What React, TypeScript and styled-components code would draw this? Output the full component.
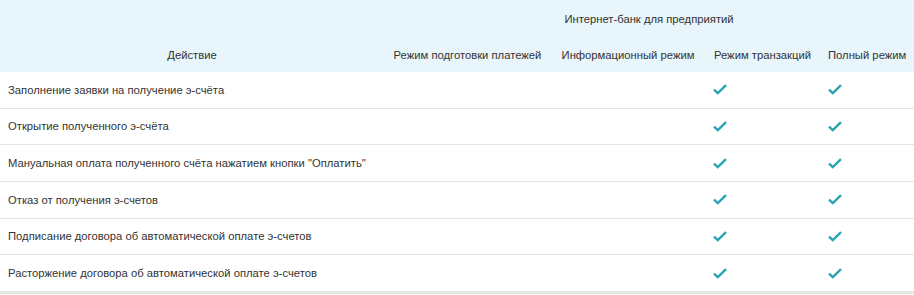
import React from "react";
import styled, { createGlobalStyle } from "styled-components";

const Global = createGlobalStyle`
  html, body { margin: 0; padding: 0; background: #ffffff; }
  body { font-family: "Liberation Sans", Arial, sans-serif; }
`;

const Table = styled.table`
  width: 914px;
  border-collapse: collapse;
  table-layout: fixed;
  font-family: "Liberation Sans", Arial, sans-serif;
  font-size: 11.25px;
  color: #333333;
`;

const Head = styled.thead`
  background: #e8f5fa;
`;

const HeadCell = styled.th<{ $align?: string }>`
  height: 34px;
  padding: 2px 8px 0;
  font-weight: normal;
  text-align: center;
  vertical-align: ${(p) => p.$align ?? "middle"};
  white-space: nowrap;
  line-height: 14px;
`;

const ActionHead = styled(HeadCell)`
  padding-bottom: 10px;
`;

const Row = styled.tr<{ $last?: boolean }>`
  border-bottom: ${(p) => (p.$last ? "3px solid #e8e6e3" : "1px solid #e5e5e5")};
`;

const Cell = styled.td`
  height: 35.67px;
  padding: 0 8px;
  text-align: left;
  vertical-align: middle;
  line-height: 14px;
  white-space: nowrap;
`;

const Check = () => (
  <svg width="14" height="11" viewBox="0 0 14 11" style={{ display: "block" }}>
    <path
      d="M1 5.6 L4.8 9.2 L13 1.2"
      fill="none"
      stroke="#2aa3b3"
      strokeWidth="2.4"
      strokeLinejoin="miter"
    />
  </svg>
);

const rows = [
  "Заполнение заявки на получение э-счёта",
  "Открытие полученного э-счёта",
  "Мануальная оплата полученного счёта нажатием кнопки \"Оплатить\"",
  "Отказ от получения э-счетов",
  "Подписание договора об автоматической оплате э-счетов",
  "Расторжение договора об автоматической оплате э-счетов",
];

export default function App() {
  return (
    <>
      <Global />
      <Table>
        <colgroup>
          <col style={{ width: 384 }} />
          <col style={{ width: 167 }} />
          <col style={{ width: 154 }} />
          <col style={{ width: 115 }} />
          <col style={{ width: 94 }} />
        </colgroup>
        <Head>
          <tr>
            <ActionHead rowSpan={2} $align="bottom">
              Действие
            </ActionHead>
            <HeadCell colSpan={4}>Интернет-банк для предприятий</HeadCell>
          </tr>
          <tr>
            <HeadCell>Режим подготовки платежей</HeadCell>
            <HeadCell>Информационный режим</HeadCell>
            <HeadCell>Режим транзакций</HeadCell>
            <HeadCell>Полный режим</HeadCell>
          </tr>
        </Head>
        <tbody>
          {rows.map((r, i) => (
            <Row key={i} $last={i === rows.length - 1}>
              <Cell>{r}</Cell>
              <Cell />
              <Cell />
              <Cell>
                <Check />
              </Cell>
              <Cell>
                <Check />
              </Cell>
            </Row>
          ))}
        </tbody>
      </Table>
    </>
  );
}
